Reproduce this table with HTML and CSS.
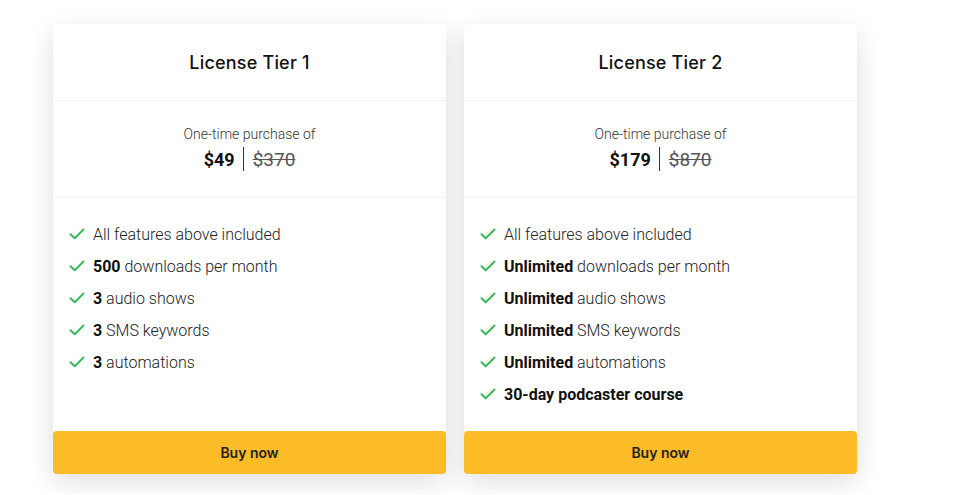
FILE: index.html
```html
<!DOCTYPE html>
<html>
<head>
<meta charset="utf-8">
<link rel="stylesheet" href="styles.css">
</head>
<body>
<div class="plans">
  <div class="card">
    <div class="card-head">License Tier 1</div>
    <div class="card-price">
      <div class="note">One-time purchase of</div>
      <div class="price"><span class="now">$49</span><span class="sep"></span><span class="was">$370</span></div>
    </div>
    <ul class="features">
      <li><svg class="chk" viewBox="0 0 16 12"><path d="M1.5 6.2l4.2 4.1L14.5 1.5" fill="none" stroke="#3cb95a" stroke-width="2" stroke-linecap="round" stroke-linejoin="round"/></svg>All features above included</li>
      <li><svg class="chk" viewBox="0 0 16 12"><path d="M1.5 6.2l4.2 4.1L14.5 1.5" fill="none" stroke="#3cb95a" stroke-width="2" stroke-linecap="round" stroke-linejoin="round"/></svg><b>500</b>&nbsp;downloads per month</li>
      <li><svg class="chk" viewBox="0 0 16 12"><path d="M1.5 6.2l4.2 4.1L14.5 1.5" fill="none" stroke="#3cb95a" stroke-width="2" stroke-linecap="round" stroke-linejoin="round"/></svg><b>3</b>&nbsp;audio shows</li>
      <li><svg class="chk" viewBox="0 0 16 12"><path d="M1.5 6.2l4.2 4.1L14.5 1.5" fill="none" stroke="#3cb95a" stroke-width="2" stroke-linecap="round" stroke-linejoin="round"/></svg><b>3</b>&nbsp;SMS keywords</li>
      <li><svg class="chk" viewBox="0 0 16 12"><path d="M1.5 6.2l4.2 4.1L14.5 1.5" fill="none" stroke="#3cb95a" stroke-width="2" stroke-linecap="round" stroke-linejoin="round"/></svg><b>3</b>&nbsp;automations</li>
    </ul>
    <button class="buy">Buy now</button>
  </div>
  <div class="card">
    <div class="card-head">License Tier 2</div>
    <div class="card-price">
      <div class="note">One-time purchase of</div>
      <div class="price"><span class="now">$179</span><span class="sep"></span><span class="was">$870</span></div>
    </div>
    <ul class="features">
      <li><svg class="chk" viewBox="0 0 16 12"><path d="M1.5 6.2l4.2 4.1L14.5 1.5" fill="none" stroke="#3cb95a" stroke-width="2" stroke-linecap="round" stroke-linejoin="round"/></svg>All features above included</li>
      <li><svg class="chk" viewBox="0 0 16 12"><path d="M1.5 6.2l4.2 4.1L14.5 1.5" fill="none" stroke="#3cb95a" stroke-width="2" stroke-linecap="round" stroke-linejoin="round"/></svg><b>Unlimited</b>&nbsp;downloads per month</li>
      <li><svg class="chk" viewBox="0 0 16 12"><path d="M1.5 6.2l4.2 4.1L14.5 1.5" fill="none" stroke="#3cb95a" stroke-width="2" stroke-linecap="round" stroke-linejoin="round"/></svg><b>Unlimited</b>&nbsp;audio shows</li>
      <li><svg class="chk" viewBox="0 0 16 12"><path d="M1.5 6.2l4.2 4.1L14.5 1.5" fill="none" stroke="#3cb95a" stroke-width="2" stroke-linecap="round" stroke-linejoin="round"/></svg><b>Unlimited</b>&nbsp;SMS keywords</li>
      <li><svg class="chk" viewBox="0 0 16 12"><path d="M1.5 6.2l4.2 4.1L14.5 1.5" fill="none" stroke="#3cb95a" stroke-width="2" stroke-linecap="round" stroke-linejoin="round"/></svg><b>Unlimited</b>&nbsp;automations</li>
      <li><svg class="chk" viewBox="0 0 16 12"><path d="M1.5 6.2l4.2 4.1L14.5 1.5" fill="none" stroke="#3cb95a" stroke-width="2" stroke-linecap="round" stroke-linejoin="round"/></svg><b>30-day podcaster course</b></li>
    </ul>
    <button class="buy">Buy now</button>
  </div>
</div>
</body>
</html>
```
FILE: styles.css
```css
* { box-sizing: border-box; }
html, body { margin: 0; background: #fff; }
body {
  font-family: Roboto, "Liberation Sans", sans-serif;
  color: #222;
}
.plans {
  display: flex;
  gap: 18px;
  padding: 24px 0 20px 53px;
  align-items: stretch;
}
.card {
  width: 393px;
  background: #fff;
  border-radius: 4px;
  box-shadow: 0 8px 28px rgba(0,0,0,0.13);
  display: flex;
  flex-direction: column;
}
.card-head {
  height: 77px;
  display: flex;
  align-items: center;
  justify-content: center;
  font-family: Inter, Roboto, sans-serif;
  font-weight: 500;
  font-size: 18px;
  letter-spacing: 0.2px;
  color: #111;
  border-bottom: 1px solid #f3f3f3;
}
.card-price {
  height: 97px;
  padding-top: 24px;
  text-align: center;
  border-bottom: 1px solid #f3f3f3;
}
.note {
  font-size: 14px;
  line-height: 18px;
  color: #333;
  font-weight: 300;
}
.price {
  margin-top: 2px;
  display: flex;
  justify-content: center;
  align-items: center;
  height: 28px;
  font-size: 18px;
}
.now { font-weight: 700; color: #111; }
.sep {
  width: 1px;
  height: 24px;
  background: #333;
  margin: 0 9px 0 8px;
}
.was {
  text-decoration: line-through;
  color: #555;
  font-weight: 400;
  font-size: 19px;
}
.features {
  list-style: none;
  margin: 0;
  padding: 20px 16px 21px;
  flex: 1;
}
.features li {
  display: flex;
  align-items: center;
  height: 32px;
  font-size: 16px;
  color: #222;
  font-weight: 300;
  white-space: nowrap;
}
.features b { font-weight: 700; color: #111; }
.chk {
  width: 16px;
  height: 12px;
  margin-right: 8px;
  flex: none;
}
.buy {
  display: block;
  width: 100%;
  height: 43px;
  border: 0;
  border-radius: 4px;
  background: #fcbc28;
  font-family: Inter, Roboto, sans-serif;
  font-weight: 600;
  font-size: 14px;
  color: #1e1e1e;
  cursor: pointer;
}
```
